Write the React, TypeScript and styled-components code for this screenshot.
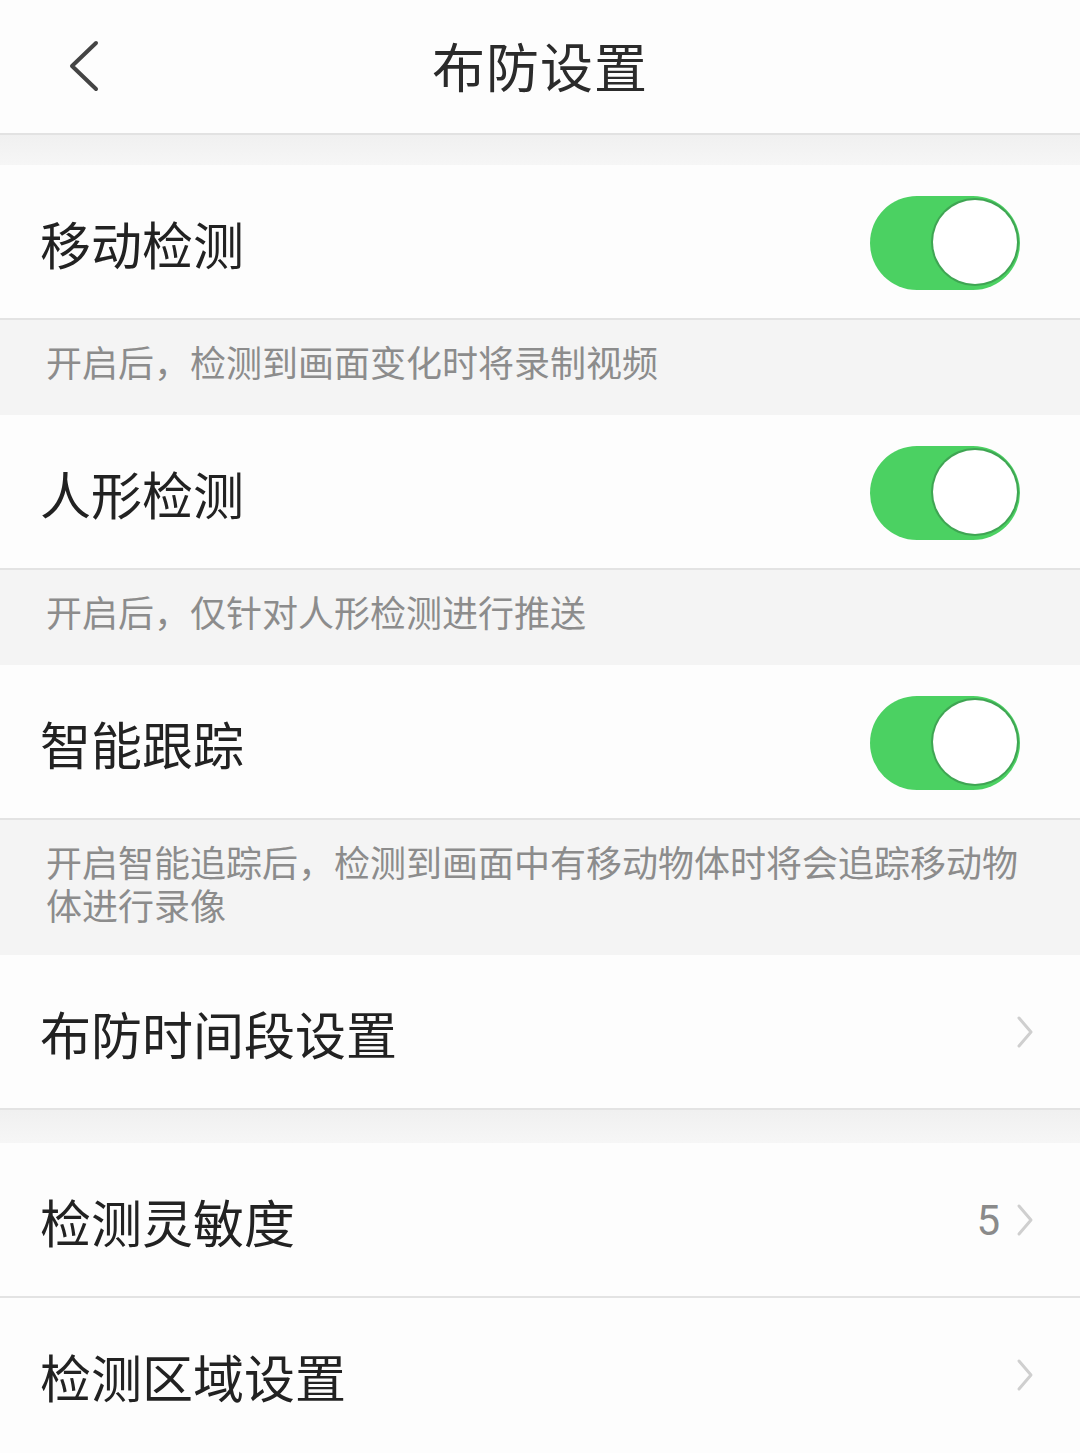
import React from "react";
import styled, { createGlobalStyle } from "styled-components";

const Global = createGlobalStyle`
  html, body { margin: 0; padding: 0; background: #f4f4f4; }
  body { font-family: "Noto Sans CJK SC", "Noto Sans", sans-serif; }
`;

const Page = styled.div`
  width: 1080px;
  min-height: 1453px;
  background: #f4f4f4;
  display: flex;
  flex-direction: column;
`;

const Header = styled.header`
  height: 133px;
  background: #fdfdfd;
  border-bottom: 2px solid #e2e2e2;
  display: grid;
  grid-template-columns: 200px 1fr 200px;
  align-items: center;
`;

const BackButton = styled.button`
  justify-self: start;
  margin-left: 66px;
  margin-top: -2px;
  padding: 0;
  border: none;
  background: transparent;
  display: flex;
`;

const Title = styled.h1`
  margin: 0;
  text-align: center;
  font-size: 53px;
  font-weight: 400;
  color: #2b2b2b;
  letter-spacing: 1px;
  margin-top: -4px;
`;

const Gap = styled.div<{ $h: number }>`
  height: ${(p) => p.$h}px;
  background: linear-gradient(#f0f0f0, #f6f6f6);
`;

const Row = styled.div<{ $last?: boolean }>`
  height: 153px;
  background: #fdfdfd;
  border-bottom: 2px solid ${(p) => (p.$last ? "transparent" : "#e3e3e3")};
  display: flex;
  align-items: center;
  padding: 0 46px 0 40px;
`;

const Label = styled.span`
  flex: 1;
  font-size: 51px;
  color: #222;
  font-weight: 400;
  margin-top: 2px;
`;

const Value = styled.span`
  font-family: Roboto, "Noto Sans", sans-serif;
  font-size: 42px;
  color: #8a8a8a;
  margin-right: 16px;
  margin-top: 2px;
`;

const Desc = styled.div`
  background: #f4f4f4;
  min-height: 95px;
  box-sizing: border-box;
  padding: 20px 60px 29px 46px;
  font-size: 36px;
  line-height: 43px;
  color: #8c8c8c;
`;

const Switch = styled.div<{ $on: boolean }>`
  position: relative;
  width: 150px;
  height: 94px;
  border-radius: 47px;
  background: ${(p) => (p.$on ? "#4bd162" : "#e5e5e5")};
  margin-right: 14px;
  margin-top: 2px;
  flex-shrink: 0;
`;

const Knob = styled.span<{ $on: boolean }>`
  position: absolute;
  top: 4px;
  ${(p) => (p.$on ? "right: 3px;" : "left: 3px;")}
  width: 84px;
  height: 84px;
  border-radius: 50%;
  background: #fff;
  box-shadow: 0 0 0 2px #3fa553;
`;

const Chevron = () => (
  <svg width="18" height="34" viewBox="0 0 18 34">
    <polyline points="3,3 15,17 3,31" fill="none" stroke="#cfcfcf" strokeWidth="3" strokeLinecap="round" strokeLinejoin="round" />
  </svg>
);

const BackIcon = () => (
  <svg width="36" height="52" viewBox="0 0 36 52">
    <polyline points="30,3 6,26 30,49" fill="none" stroke="#444" strokeWidth="4" strokeLinecap="round" strokeLinejoin="round" />
  </svg>
);

const toggles = [
  { label: "移动检测", desc: "开启后，检测到画面变化时将录制视频" },
  { label: "人形检测", desc: "开启后，仅针对人形检测进行推送" },
  { label: "智能跟踪", desc: "开启智能追踪后，检测到画面中有移动物体时将会追踪移动物体进行录像" },
];

export default function App() {
  return (
    <Page>
      <Global />
      <Header>
        <BackButton aria-label="返回">
          <BackIcon />
        </BackButton>
        <Title>布防设置</Title>
        <span />
      </Header>
      <Gap $h={30} />
      {toggles.map((t) => (
        <React.Fragment key={t.label}>
          <Row>
            <Label>{t.label}</Label>
            <Switch $on>
              <Knob $on />
            </Switch>
          </Row>
          <Desc>{t.desc}</Desc>
        </React.Fragment>
      ))}
      <Row>
        <Label>布防时间段设置</Label>
        <Chevron />
      </Row>
      <Gap $h={33} />
      <Row>
        <Label>检测灵敏度</Label>
        <Value>5</Value>
        <Chevron />
      </Row>
      <Row $last>
        <Label>检测区域设置</Label>
        <Chevron />
      </Row>
    </Page>
  );
}
